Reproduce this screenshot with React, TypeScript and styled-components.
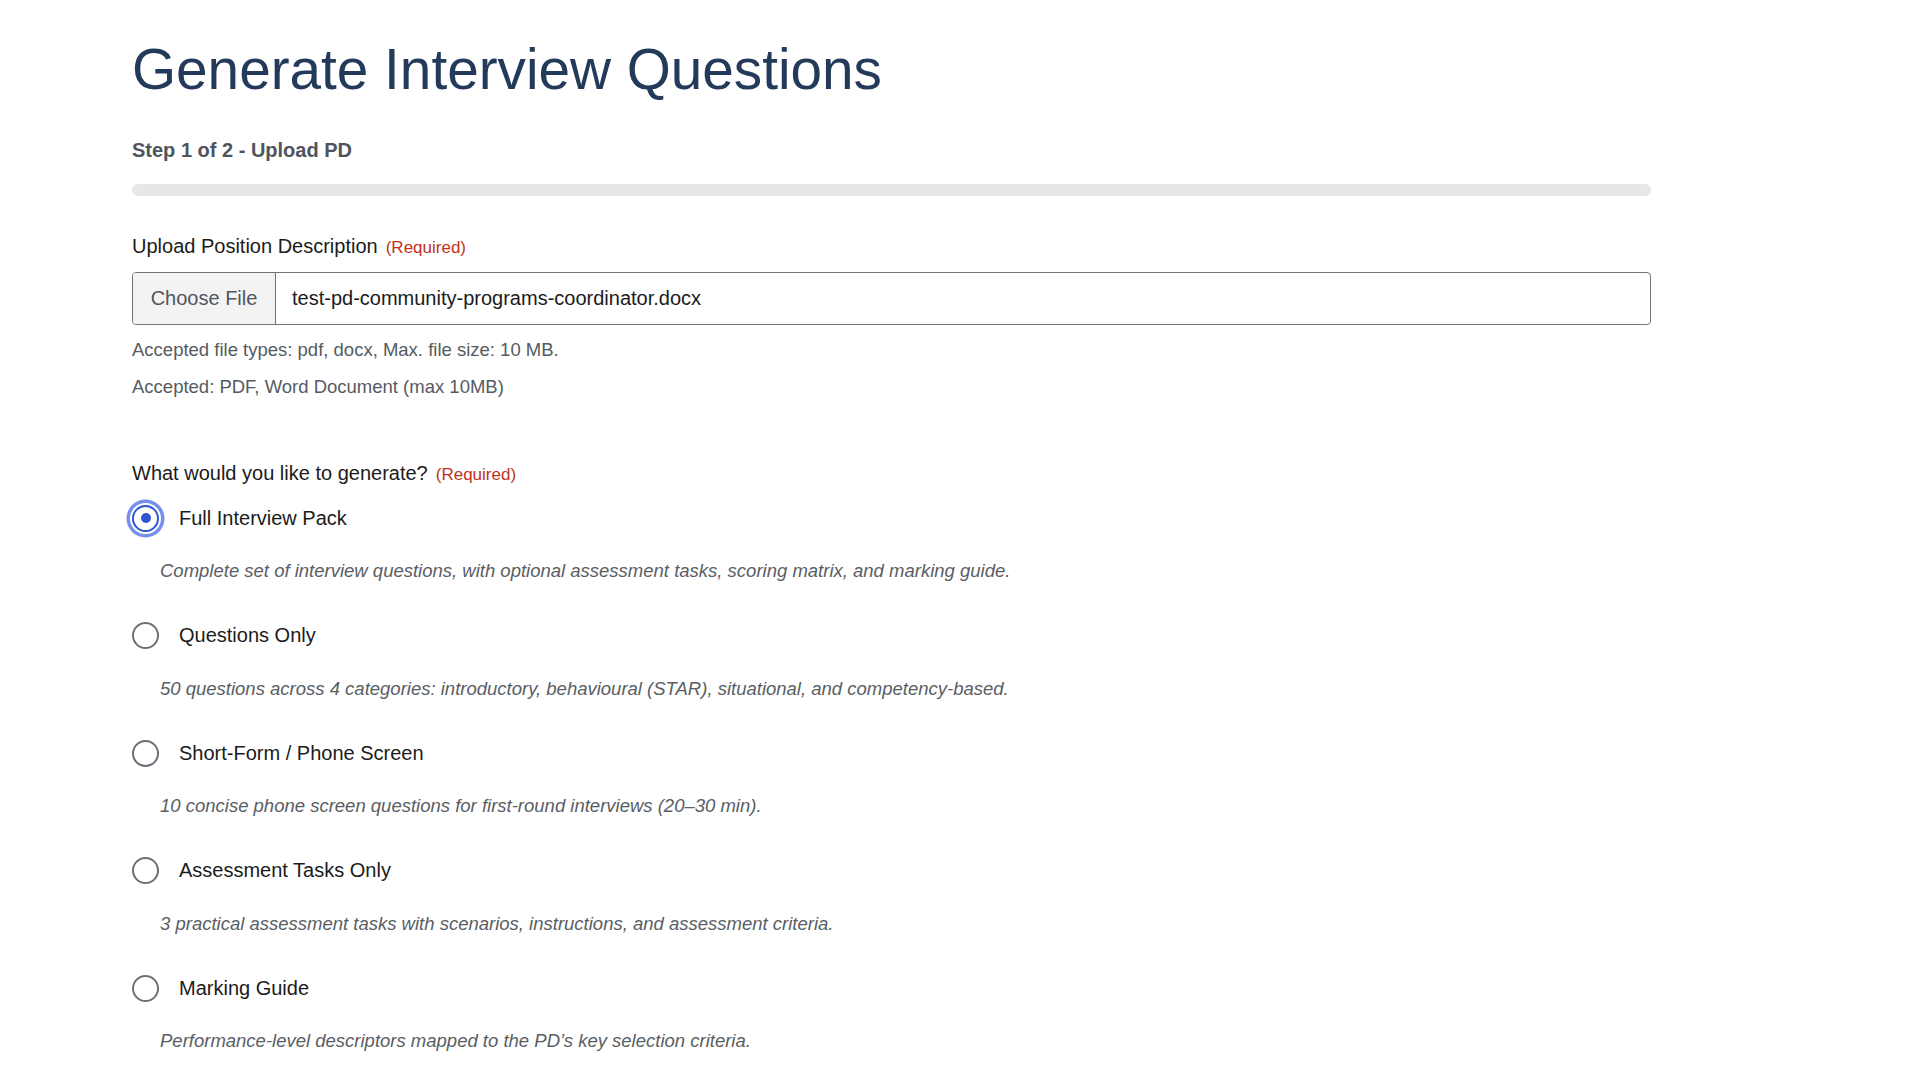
import React, { useState } from "react";
import styled, { createGlobalStyle } from "styled-components";

const GlobalStyle = createGlobalStyle`
  html, body { margin: 0; padding: 0; background: #ffffff; }
  body { font-family: "Liberation Sans", Arial, sans-serif; color: #1b1b1b; }
  * { box-sizing: border-box; }
`;

const Page = styled.main`
  padding: 36px 0 40px 132px;
  width: 1651px;
`;

const Title = styled.h1`
  margin: 0;
  font-size: 56.7px;
  line-height: 67px;
  font-weight: 400;
  color: #243a5a;
  letter-spacing: 0;
`;

const StepLabel = styled.p`
  margin: 35px 0 0;
  font-size: 20px;
  line-height: 24px;
  font-weight: 700;
  color: #4f545c;
`;

const Progress = styled.div`
  margin-top: 22px;
  height: 12px;
  border-radius: 6px;
  background: #e6e7e9;
  overflow: hidden;
`;

const Field = styled.section<{ $top: number }>`
  margin-top: ${(p) => p.$top}px;
  display: flex;
  flex-direction: column;
`;

const Label = styled.label`
  font-size: 20px;
  line-height: 24px;
  color: #1b1b1b;
  display: flex;
  align-items: baseline;
  gap: 8px;
`;

const Required = styled.span`
  font-size: 17px;
  color: #c0321b;
`;

const FileBox = styled.div`
  margin-top: 12px;
  height: 53px;
  display: flex;
  align-items: stretch;
  border: 1.5px solid #6f747c;
  border-radius: 4px;
  overflow: hidden;
  background: #fff;
`;

const ChooseButton = styled.button`
  flex: 0 0 auto;
  width: 143px;
  border: none;
  border-right: 1.5px solid #6f747c;
  background: #f3f3f3;
  font-family: inherit;
  font-size: 20px;
  color: #50565e;
  padding: 0;
  cursor: pointer;
`;

const FileName = styled.span`
  display: flex;
  align-items: center;
  padding-left: 16px;
  font-size: 20px;
  color: #1b1b1b;
`;

const Hint = styled.p<{ $top: number }>`
  margin: ${(p) => p.$top}px 0 0;
  font-size: 18.5px;
  line-height: 22px;
  color: #555b62;
`;

const Options = styled.div`
  margin-top: 13.5px;
  display: flex;
  flex-direction: column;
  gap: 36px;
`;

const Option = styled.div`
  display: flex;
  flex-direction: column;
`;

const OptionRow = styled.label`
  display: flex;
  align-items: center;
  gap: 20px;
  height: 35px;
  font-size: 20px;
  color: #1b1b1b;
  cursor: pointer;
`;

const Radio = styled.input`
  appearance: none;
  margin: 0;
  width: 27px;
  height: 27px;
  border-radius: 50%;
  border: 2px solid #6b7078;
  background: #fff;
  display: grid;
  place-items: center;
  flex: 0 0 auto;

  &:checked {
    border-color: #2f55d4;
    box-shadow: 0 0 0 2px #ffffff, 0 0 0 5.5px #7590ec;
  }
  &:checked::after {
    content: "";
    width: 10px;
    height: 10px;
    border-radius: 50%;
    background: #2f55d4;
  }
`;

const Description = styled.p`
  margin: 24.5px 0 0 28px;
  font-size: 18.5px;
  line-height: 22px;
  font-style: italic;
  color: #595e64;
`;

const options = [
  {
    id: "full",
    label: "Full Interview Pack",
    desc: "Complete set of interview questions, with optional assessment tasks, scoring matrix, and marking guide.",
  },
  {
    id: "questions",
    label: "Questions Only",
    desc: "50 questions across 4 categories: introductory, behavioural (STAR), situational, and competency-based.",
  },
  {
    id: "short",
    label: "Short-Form / Phone Screen",
    desc: "10 concise phone screen questions for first-round interviews (20\u201330 min).",
  },
  {
    id: "tasks",
    label: "Assessment Tasks Only",
    desc: "3 practical assessment tasks with scenarios, instructions, and assessment criteria.",
  },
  {
    id: "marking",
    label: "Marking Guide",
    desc: "Performance-level descriptors mapped to the PD\u2019s key selection criteria.",
  },
];

export default function App() {
  const [selected, setSelected] = useState("full");
  return (
    <>
      <GlobalStyle />
      <Page>
        <Title>Generate Interview Questions</Title>
        <StepLabel>Step 1 of 2 - Upload PD</StepLabel>
        <Progress />

        <Field $top={38}>
          <Label>
            Upload Position Description <Required>(Required)</Required>
          </Label>
          <FileBox>
            <ChooseButton type="button">Choose File</ChooseButton>
            <FileName>test-pd-community-programs-coordinator.docx</FileName>
          </FileBox>
          <Hint $top={14}>Accepted file types: pdf, docx, Max. file size: 10 MB.</Hint>
          <Hint $top={15}>Accepted: PDF, Word Document (max 10MB)</Hint>
        </Field>

        <Field $top={63}>
          <Label as="div">
            What would you like to generate? <Required>(Required)</Required>
          </Label>
          <Options>
            {options.map((o) => (
              <Option key={o.id}>
                <OptionRow>
                  <Radio
                    type="radio"
                    name="generate"
                    value={o.id}
                    checked={selected === o.id}
                    onChange={() => setSelected(o.id)}
                  />
                  {o.label}
                </OptionRow>
                <Description>{o.desc}</Description>
              </Option>
            ))}
          </Options>
        </Field>
      </Page>
    </>
  );
}
